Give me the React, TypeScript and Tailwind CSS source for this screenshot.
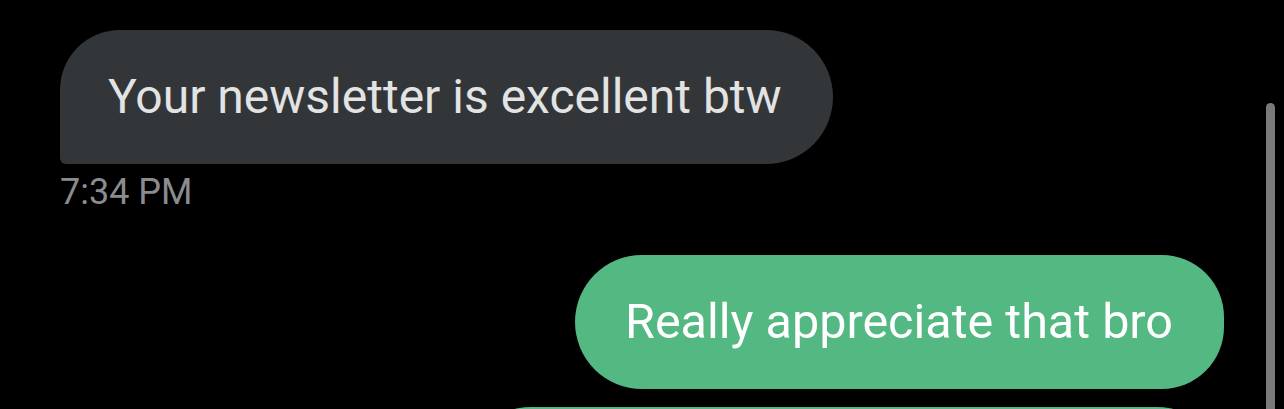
export default function App() {
  return (
    <div className="relative h-[409px] w-full overflow-hidden bg-black font-['Roboto',sans-serif]">
      <div className="flex flex-col pl-[60px] pr-[60px] pt-[30px]">
        <div className="flex justify-start">
          <div className="flex h-[134px] items-center rounded-tl-[60px] rounded-tr-[67px] rounded-br-[67px] rounded-bl-[6px] bg-[#323639] pl-[48px] pr-[51px] text-[48px] text-[#e3e3e3]">
            Your newsletter is excellent btw
          </div>
        </div>
        <div className="mt-[10px] h-[36px] text-[36px] leading-[36px] text-[#8a8c8e]">7:34 PM</div>
        <div className="mt-[45px] flex justify-end">
          <div className="flex h-[134px] items-center rounded-l-[67px] rounded-r-[62px] bg-[#53b882] pl-[50px] pr-[51px] text-[48.5px] text-white">
            Really appreciate that bro
          </div>
        </div>
        <div className="mt-[18px] flex justify-end">
          <div className="h-[134px] w-[760px] rounded-[67px] bg-[#53b882]" />
        </div>
      </div>
      <div className="absolute right-[9px] top-[103px] h-[320px] w-[9px] rounded-t-full bg-[#7a7a7a]" />
    </div>
  );
}
